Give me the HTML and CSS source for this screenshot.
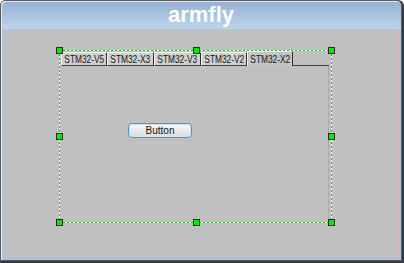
FILE: index.html
```html
<!DOCTYPE html>
<html>
<head>
<meta charset="utf-8">
<link rel="stylesheet" href="styles.css">
</head>
<body>
<div class="frame">
  <div class="window">
    <div class="titlebar">armfly</div>
    <div class="client">
      <div class="tabwidget">
        <div class="tabs">
          <div class="tab"><span>STM32-V5</span></div>
          <div class="tab wide"><span>STM32-X3</span></div>
          <div class="tab wide"><span>STM32-V3</span></div>
          <div class="tab"><span>STM32-V2</span></div>
          <div class="tab active"><span>STM32-X2</span></div>
          <div class="tabfill"></div>
        </div>
        <div class="tabbody"></div>
      </div>
      <button class="btn">Button</button>
      <div class="sel"></div>
      <div class="h h-tl"></div>
      <div class="h h-tm"></div>
      <div class="h h-tr"></div>
      <div class="h h-ml"></div>
      <div class="h h-mr"></div>
      <div class="h h-bl"></div>
      <div class="h h-bm"></div>
      <div class="h h-br"></div>
    </div>
  </div>
</div>
</body>
</html>
```
FILE: styles.css
```css
html, body {
  margin: 0;
  padding: 0;
  background: #ffffff;
}
.frame {
  width: 404px;
  height: 263px;
  box-sizing: border-box;
  padding: 0 2px 2px 0;
  background: #3a3a3a;
  border-radius: 6px 6px 0 0;
}
.window {
  width: 402px;
  height: 261px;
  box-sizing: border-box;
  border: 1px solid #5c5c5c;
  border-radius: 6px 6px 0 0;
  background: #aac4e2;
  padding: 0 3px 3px 3px;
  display: flex;
  flex-direction: column;
  box-shadow: inset 1px 1px 0 #e8f0f8;
}
.titlebar {
  height: 28px;
  margin: 0 -3px;
  border-radius: 5px 5px 0 0;
  background: linear-gradient(to bottom, #95b1d2, #bdd4ed);
  color: #ffffff;
  font-family: "Liberation Sans", Arial, sans-serif;
  font-weight: bold;
  font-size: 22px;
  line-height: 28px;
  text-align: center;
  box-shadow: inset 1px 1px 0 #dfe9f4;
}
.client {
  flex: 1;
  background: #c0c0c0;
  position: relative;
  box-shadow: 1px 0 0 #d9b8b8;
}
.tabwidget {
  position: absolute;
  left: 57px;
  top: 22px;
  width: 268px;
  height: 171px;
  display: flex;
  flex-direction: column;
}
.tabs {
  display: flex;
  height: 15px;
}
.tab {
  width: 46px;
  height: 14px;
  box-sizing: border-box;
  background: #d0d0d0;
  border-top: 1px solid #f4f4f4;
  border-left: 1px solid #f4f4f4;
  border-right: 1px solid #2e2e2e;
  border-bottom: 1px solid #404040;
  margin-top: 1px;
  display: flex;
  justify-content: center;
  align-items: center;
  white-space: nowrap;
}
.tab.wide {
  width: 47px;
}
.tab span {
  display: inline-block;
  font-family: "Liberation Sans", Arial, sans-serif;
  font-size: 11px;
  line-height: 12px;
  color: #161616;
  transform: scaleX(0.76);
}
.tab.active {
  height: 15px;
  margin-top: 0;
  background: #c4c4c4;
  border-bottom: none;
  padding-bottom: 1px;
}
.tabfill {
  flex: 1;
  border-bottom: 1px solid #404040;
}
.tabbody {
  flex: 1;
  border-right: 1px solid #a8a8a8;
}
.btn {
  position: absolute;
  left: 124px;
  top: 94px;
  width: 64px;
  height: 15px;
  box-sizing: border-box;
  border: 1px solid #3d9bd6;
  border-radius: 4px;
  background: linear-gradient(to bottom, #f8f8f8, #dcdcdc);
  font-family: "Liberation Sans", Arial, sans-serif;
  font-size: 10px;
  line-height: 12px;
  color: #111111;
  padding: 0;
  box-shadow: inset 0 0 0 1px #cde6f5;
}
.sel {
  position: absolute;
  left: 55px;
  top: 21px;
  width: 273px;
  height: 173px;
  box-sizing: border-box;
  background:
    repeating-linear-gradient(90deg, #2fbf2f 0 2px, #f0fff0 2px 4px) left top / 100% 1px no-repeat,
    repeating-linear-gradient(90deg, #2fbf2f 0 2px, #f0fff0 2px 4px) left bottom / 100% 1px no-repeat,
    repeating-linear-gradient(180deg, #2fbf2f 0 2px, #f0fff0 2px 4px) left top / 1px 100% no-repeat,
    repeating-linear-gradient(180deg, #2fbf2f 0 2px, #f0fff0 2px 4px) right top / 1px 100% no-repeat;
}
.h {
  position: absolute;
  width: 7px;
  height: 7px;
  box-sizing: border-box;
  border: 1px solid #2a2a2a;
  background: #00ee00;
}
.h-tl { left: 52px; top: 18px; }
.h-tm { left: 189px; top: 18px; }
.h-tr { left: 324px; top: 18px; }
.h-ml { left: 52px; top: 104px; }
.h-mr { left: 324px; top: 104px; }
.h-bl { left: 52px; top: 190px; }
.h-bm { left: 189px; top: 190px; }
.h-br { left: 324px; top: 190px; }
```
